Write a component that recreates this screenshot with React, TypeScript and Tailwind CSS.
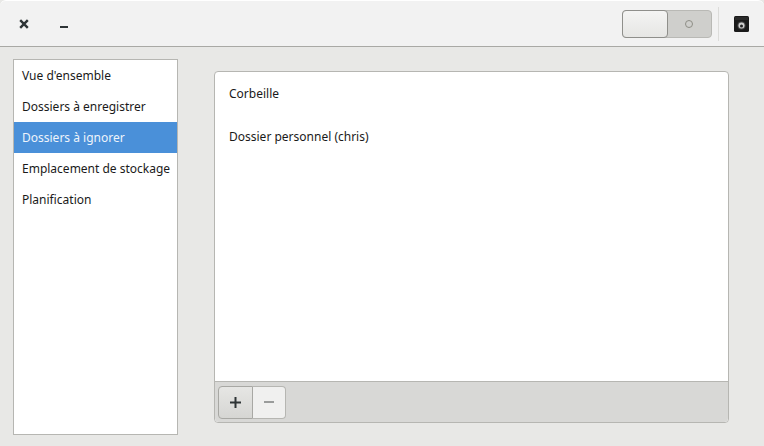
import React from 'react';

const sidebarItems = [
  "Vue d'ensemble",
  'Dossiers à enregistrer',
  'Dossiers à ignorer',
  'Emplacement de stockage',
  'Planification',
];

const folders = ['Corbeille', 'Dossier personnel (chris)'];

function CameraIcon() {
  return (
    <svg width="15" height="16" viewBox="0 0 15 16" className="block">
      <rect x="0" y="0" width="15" height="16" rx="1.5" fill="#1a1a1a" />
      <rect x="1" y="1" width="13" height="3" fill="#2a2a2a" />
      <circle cx="7.5" cy="9.5" r="4" fill="#4a4a4a" />
      <circle cx="7.5" cy="9.5" r="3" fill="#cfcfcf" />
      <circle cx="7.5" cy="10" r="1.5" fill="#222222" />
    </svg>
  );
}

export default function App() {
  return (
    <div className="w-[764px] h-[446px] flex flex-col overflow-hidden bg-[#e8e8e6] text-[12px] text-[#1a1a1a] font-['Noto_Sans','Open_Sans',sans-serif]">
      {/* Header */}
      <div className="h-[47px] shrink-0 flex items-center bg-[#f2f2f2] border-b border-[#a9a9a5] rounded-t-[6px] border-t border-t-white">
        <button className="w-[14px] ml-[17px] flex justify-center text-[#2e3436]" aria-label="Fermer">
          <svg width="10" height="10" viewBox="0 0 10 10">
            <path d="M1.2 1.2 L8.8 8.8 M8.8 1.2 L1.2 8.8" stroke="#2e3436" strokeWidth="2.4" />
          </svg>
        </button>
        <button className="ml-[29px] mt-[6px]" aria-label="Réduire">
          <div className="w-[8px] h-[2px] bg-[#2e3436]" />
        </button>
        <div className="flex-1" />
        <div className="w-[90px] h-[28px] flex bg-[#cfcfcc] border border-[#b9b9b5] rounded-[4px]">
          <div className="w-[46px] -m-px h-[28px] bg-gradient-to-b from-[#f4f4f3] to-[#e6e6e4] border border-[#8f8f8b] rounded-[4px]" />
          <div className="flex-1 flex items-center justify-center pr-[1px]">
            <div className="w-[8px] h-[8px] rounded-full border border-[#8e8e86]" />
          </div>
        </div>
        <div className="w-px h-[34px] bg-[#dcdcda] ml-[6px]" />
        <div className="ml-[15px] mr-[15px]">
          <CameraIcon />
        </div>
      </div>

      {/* Body */}
      <div className="flex-1 flex pl-[13px] pr-[35px] pt-[12px] pb-[11px] min-h-0">
        <div className="w-[165px] shrink-0 bg-white border border-[#b6b6b2]">
          {sidebarItems.map((item) => (
            <div
              key={item}
              className={
                item === 'Dossiers à ignorer'
                  ? 'h-[31px] flex items-center pl-[8px] bg-[#4a90d9] text-[#eef4fb]'
                  : 'h-[31px] flex items-center pl-[8px]'
              }
            >
              {item}
            </div>
          ))}
        </div>

        <div className="flex-1 ml-[36px] mt-[12px] mb-[12px] flex flex-col bg-white border border-[#b6b6b2] rounded-[4px] min-w-0">
          <div className="flex-1 pt-[13px] pl-[14px]">
            {folders.map((folder) => (
              <div key={folder} className="h-[43px]">
                {folder}
              </div>
            ))}
          </div>
          <div className="h-[41px] shrink-0 flex items-center pl-[3px] bg-[#d8d8d6] border-t border-[#b6b6b2] rounded-b-[4px]">
            <button
              className="w-[35px] h-[33px] flex items-center justify-center bg-gradient-to-b from-[#e6e6e4] to-[#d6d6d3] border border-[#a8a8a4] rounded-l-[4px]"
              aria-label="Ajouter"
            >
              <svg width="11" height="11" viewBox="0 0 11 11">
                <path d="M0 5.5 H11 M5.5 0 V11" stroke="#2e3436" strokeWidth="2" />
              </svg>
            </button>
            <button
              className="w-[33px] h-[33px] flex items-center justify-center bg-[#f0f0ef] border border-l-0 border-[#b6b6b2] rounded-r-[4px]"
              aria-label="Retirer"
            >
              <div className="w-[10px] h-[2px] bg-[#9a9c9b]" />
            </button>
          </div>
        </div>
      </div>
    </div>
  );
}
